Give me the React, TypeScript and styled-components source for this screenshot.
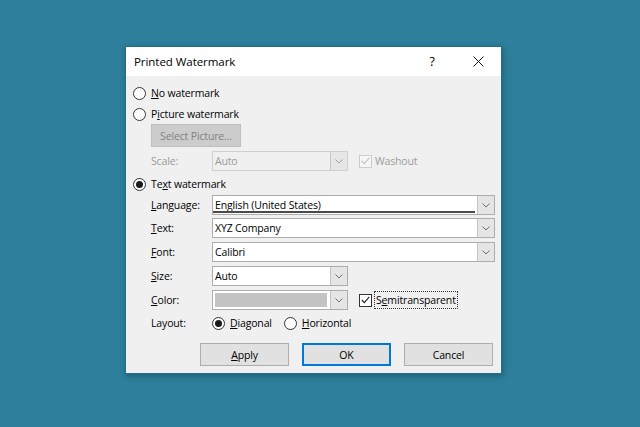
import React, { FC, ReactNode } from 'react';
import styled, { createGlobalStyle, css } from 'styled-components';

const GlobalStyle = createGlobalStyle`
  html, body {
    margin: 0;
    padding: 0;
    background: #2e7f9b;
  }
  body {
    font-family: "Open Sans", "Noto Sans", "Liberation Sans", sans-serif;
    font-size: 10.5px;
    letter-spacing: -0.15px;
    color: #000;
  }
`;

const Page = styled.div`
  width: 640px;
  height: 427px;
  padding: 46px 0 0 125px;
  box-sizing: border-box;
`;

const Dialog = styled.div`
  width: 377px;
  height: 328px;
  box-sizing: border-box;
  border: 1px solid #246d88;
  background: #f0f0f0;
  box-shadow: 1px 2px 6px rgba(0, 30, 50, 0.35);
  display: flex;
  flex-direction: column;
`;

const TitleBar = styled.div`
  height: 29px;
  flex: none;
  background: #fff;
  display: flex;
  align-items: center;
  padding-left: 8px;
`;

const Title = styled.div`
  flex: 1;
  font-size: 11.5px;
  letter-spacing: -0.05px;
`;

const TitleButton = styled.div`
  width: 46px;
  height: 29px;
  display: flex;
  align-items: center;
  justify-content: center;
  font-size: 12.5px;
`;

const Body = styled.div`
  padding: 7px 7px 0 7px;
  display: flex;
  flex-direction: column;
`;

const RadioRow = styled.label<{ $top?: number }>`
  height: 20px;
  margin-top: ${({ $top = 0 }) => $top}px;
  display: flex;
  align-items: center;
  gap: 5px;
  white-space: nowrap;
`;

const RadioDot = styled.span<{ $checked?: boolean }>`
  width: 11px;
  height: 11px;
  flex: none;
  border: 1px solid #333;
  border-radius: 50%;
  background: #fff;
  display: flex;
  align-items: center;
  justify-content: center;
  &::after {
    content: '';
    width: 7px;
    height: 7px;
    border-radius: 50%;
    background: ${({ $checked }) => ($checked ? '#1a1a1a' : 'transparent')};
  }
`;

const Key = styled.span`
  text-decoration: underline;
  text-underline-offset: 1px;
`;

const Indent = styled.div`
  margin-left: 18px;
  display: flex;
  flex-direction: column;
`;

const PushButton = styled.div<{ $disabled?: boolean; $default?: boolean; $width?: number }>`
  width: ${({ $width = 89 }) => $width}px;
  height: 23px;
  box-sizing: border-box;
  display: flex;
  align-items: center;
  justify-content: center;
  background: #e1e1e1;
  border: 1px solid #adadad;
  ${({ $disabled }) =>
    $disabled &&
    css`
      background: #cccccc;
      border-color: #bfbfbf;
      color: #838383;
    `}
  ${({ $default }) =>
    $default &&
    css`
      border: 2px solid #0078d7;
    `}
`;

const FormRow = styled.div<{ $top: number }>`
  height: 20px;
  margin-top: ${({ $top }) => $top}px;
  display: grid;
  grid-template-columns: 61px auto auto;
  justify-content: start;
  align-items: center;
`;

const Label = styled.span<{ $disabled?: boolean }>`
  color: ${({ $disabled }) => ($disabled ? '#9b9b9b' : '#000')};
`;

const Combo = styled.div<{ $width: number; $disabled?: boolean }>`
  width: ${({ $width }) => $width}px;
  height: 20px;
  box-sizing: border-box;
  display: flex;
  border: 1px solid ${({ $disabled }) => ($disabled ? '#cfcfcf' : '#adadad')};
  background: ${({ $disabled }) => ($disabled ? '#f0f0f0' : '#fff')};
  color: ${({ $disabled }) => ($disabled ? '#9b9b9b' : '#000')};
`;

const ComboText = styled.div<{ $focused?: boolean }>`
  flex: 1;
  display: flex;
  align-items: center;
  padding-left: 2px;
  margin-right: 2px;
  white-space: nowrap;
  overflow: hidden;
  box-sizing: border-box;
  ${({ $focused }) =>
    $focused &&
    css`
      border-bottom: 2px solid #4a4a4a;
      margin-bottom: 1px;
      padding-top: 2px;
    `}
`;

const Swatch = styled.div`
  flex: 1;
  margin: 2px 3px 2px 2px;
  background: #c3c3c3;
`;

const DropButton = styled.div<{ $disabled?: boolean }>`
  width: 16px;
  flex: none;
  background: ${({ $disabled }) => ($disabled ? '#e6e6e6' : '#e5e5e5')};
  border-left: 1px solid #c5c5c5;
  display: flex;
  align-items: center;
  justify-content: center;
`;

const Chevron: FC<{ color?: string }> = ({ color = '#707070' }) => (
  <svg width="8" height="5" viewBox="0 0 8 5">
    <path d="M0.5 0.5 L4 4 L7.5 0.5" fill="none" stroke={color} strokeWidth="1" />
  </svg>
);

const CheckWrap = styled.div`
  margin-left: 11px;
  display: flex;
  align-items: center;
  gap: 3px;
`;

const CheckBox = styled.span<{ $disabled?: boolean }>`
  width: 11px;
  height: 11px;
  flex: none;
  border: 1px solid ${({ $disabled }) => ($disabled ? '#cccccc' : '#333')};
  background: ${({ $disabled }) => ($disabled ? '#f5f5f5' : '#fff')};
  display: flex;
  align-items: center;
  justify-content: center;
`;

const CheckMark: FC<{ color: string }> = ({ color }) => (
  <svg width="9" height="8" viewBox="0 0 9 8">
    <path d="M0.8 4 L3.3 6.6 L8.3 0.8" fill="none" stroke={color} strokeWidth="1.1" />
  </svg>
);

const FocusLabel = styled.span`
  outline: 1px dotted #333;
  outline-offset: 0px;
  padding: 0 1px;
  line-height: 16px;
`;

const LayoutOptions = styled.div`
  display: flex;
  align-items: center;
  gap: 12px;
`;

const Buttons = styled.div`
  margin-top: 10px;
  padding-right: 1px;
  display: flex;
  justify-content: flex-end;
  gap: 13px;
`;

const CloseIcon = () => (
  <svg width="11" height="11" viewBox="0 0 11 11">
    <path d="M0.5 0.5 L10.5 10.5 M10.5 0.5 L0.5 10.5" stroke="#111" strokeWidth="1" />
  </svg>
);

const Field: FC<{ top: number; label: ReactNode; children: ReactNode; disabled?: boolean }> = ({
  top,
  label,
  children,
  disabled,
}) => (
  <FormRow $top={top}>
    <Label $disabled={disabled}>{label}</Label>
    {children}
  </FormRow>
);

export default function App() {
  return (
    <>
      <GlobalStyle />
      <Page>
        <Dialog>
          <TitleBar>
            <Title>Printed Watermark</Title>
            <TitleButton>?</TitleButton>
            <TitleButton>
              <CloseIcon />
            </TitleButton>
          </TitleBar>
          <Body>
            <RadioRow>
              <RadioDot />
              <span>
                <Key>N</Key>o watermark
              </span>
            </RadioRow>
            <RadioRow $top={1}>
              <RadioDot />
              <span>
                P<Key>i</Key>cture watermark
              </span>
            </RadioRow>
            <Indent>
              <PushButton $disabled $width={90}>
                Select Picture...
              </PushButton>
              <Field top={4} label="Scale:" disabled>
                <Combo $width={136} $disabled>
                  <ComboText>Auto</ComboText>
                  <DropButton $disabled>
                    <Chevron color="#a0a0a0" />
                  </DropButton>
                </Combo>
                <CheckWrap>
                  <CheckBox $disabled>
                    <CheckMark color="#c4c4c4" />
                  </CheckBox>
                  <Label $disabled>Washout</Label>
                </CheckWrap>
              </Field>
            </Indent>
            <RadioRow $top={3}>
              <RadioDot $checked />
              <span>
                Te<Key>x</Key>t watermark
              </span>
            </RadioRow>
            <Indent>
              <Field
                top={1}
                label={
                  <>
                    <Key>L</Key>anguage:
                  </>
                }
              >
                <Combo $width={283}>
                  <ComboText $focused>English (United States)</ComboText>
                  <DropButton>
                    <Chevron />
                  </DropButton>
                </Combo>
              </Field>
              <Field
                top={3}
                label={
                  <>
                    <Key>T</Key>ext:
                  </>
                }
              >
                <Combo $width={283}>
                  <ComboText>XYZ Company</ComboText>
                  <DropButton>
                    <Chevron />
                  </DropButton>
                </Combo>
              </Field>
              <Field
                top={4}
                label={
                  <>
                    <Key>F</Key>ont:
                  </>
                }
              >
                <Combo $width={283}>
                  <ComboText>Calibri</ComboText>
                  <DropButton>
                    <Chevron />
                  </DropButton>
                </Combo>
              </Field>
              <Field
                top={4}
                label={
                  <>
                    <Key>S</Key>ize:
                  </>
                }
              >
                <Combo $width={136}>
                  <ComboText>Auto</ComboText>
                  <DropButton>
                    <Chevron />
                  </DropButton>
                </Combo>
              </Field>
              <Field
                top={4}
                label={
                  <>
                    <Key>C</Key>olor:
                  </>
                }
              >
                <Combo $width={136}>
                  <Swatch />
                  <DropButton>
                    <Chevron />
                  </DropButton>
                </Combo>
                <CheckWrap>
                  <CheckBox>
                    <CheckMark color="#222" />
                  </CheckBox>
                  <FocusLabel>
                    S<Key>e</Key>mitransparent
                  </FocusLabel>
                </CheckWrap>
              </Field>
              <Field top={3} label="Layout:">
                <LayoutOptions>
                  <RadioRow>
                    <RadioDot $checked />
                    <span>
                      <Key>D</Key>iagonal
                    </span>
                  </RadioRow>
                  <RadioRow>
                    <RadioDot />
                    <span>
                      <Key>H</Key>orizontal
                    </span>
                  </RadioRow>
                </LayoutOptions>
              </Field>
            </Indent>
            <Buttons>
              <PushButton>
                <span>
                  <Key>A</Key>pply
                </span>
              </PushButton>
              <PushButton $default>OK</PushButton>
              <PushButton>Cancel</PushButton>
            </Buttons>
          </Body>
        </Dialog>
      </Page>
    </>
  );
}
